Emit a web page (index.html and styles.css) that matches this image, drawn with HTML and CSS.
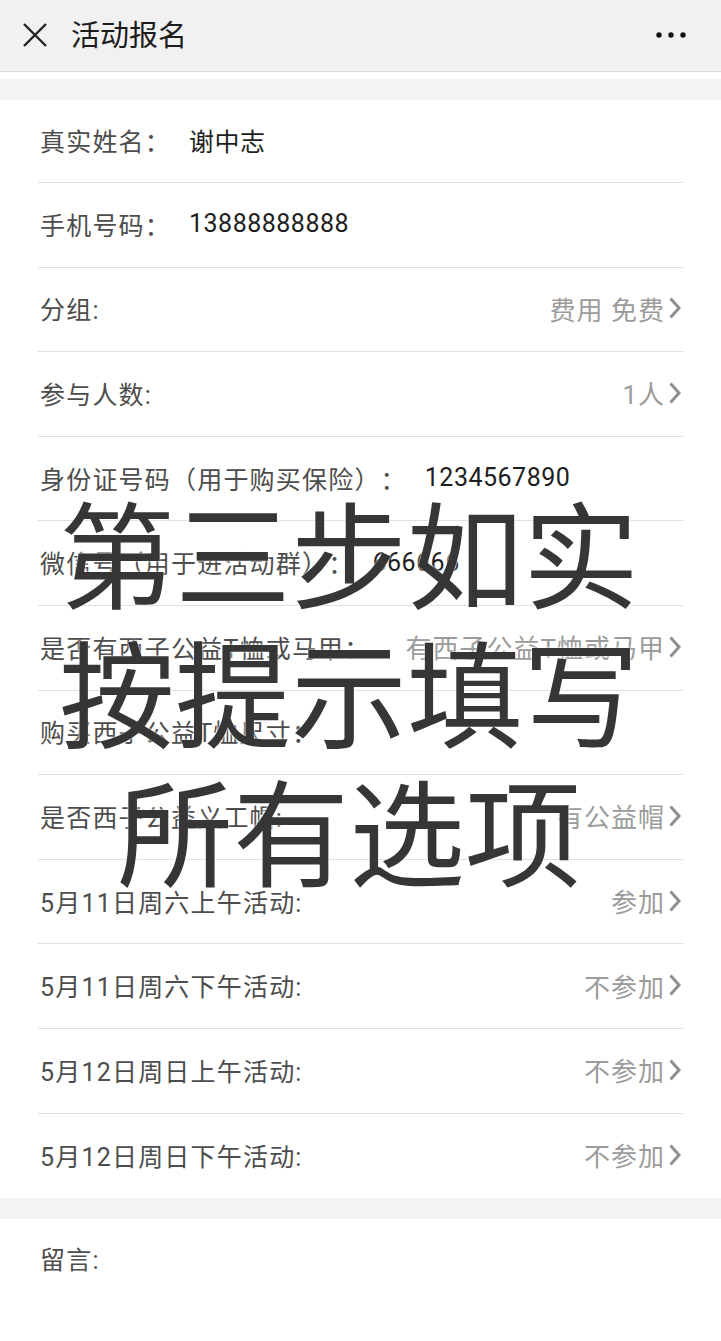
FILE: index.html
```html
<!DOCTYPE html>
<html lang="zh-CN">
<head>
<meta charset="utf-8">
<title>活动报名</title>
<link rel="stylesheet" href="styles.css">
</head>
<body>
<div class="page">
  <header class="topbar">
    <svg class="close-icon" width="28" height="28" viewBox="0 0 28 28"><path d="M3 3 L25 25 M25 3 L3 25" stroke="#222" stroke-width="2.4" fill="none" stroke-linecap="butt"/></svg>
    <h1 class="title">活动报名</h1>
    <svg class="more-icon" width="32" height="8" viewBox="0 0 32 8"><circle cx="4" cy="4" r="2.7" fill="#111"/><circle cx="16" cy="4" r="2.7" fill="#111"/><circle cx="28" cy="4" r="2.7" fill="#111"/></svg>
  </header>
  <div class="gap-white"></div>
  <div class="gap-gray"></div>

  <main class="content">
    <section class="form">
      <div class="row row-first"><span class="label">真实姓名：</span><span class="value">谢中志</span></div>
      <div class="row"><span class="label">手机号码：</span><span class="value">13888888888</span></div>
      <div class="row"><span class="label">分组:</span><span class="pick">费用 免费<svg class="chev" width="14" height="24" viewBox="0 0 14 24"><path d="M2.5 2.5 L11 12 L2.5 21.5" stroke="#8f8f8f" stroke-width="3" fill="none"/></svg></span></div>
      <div class="row"><span class="label">参与人数:</span><span class="pick">1人<svg class="chev" width="14" height="24" viewBox="0 0 14 24"><path d="M2.5 2.5 L11 12 L2.5 21.5" stroke="#8f8f8f" stroke-width="3" fill="none"/></svg></span></div>
      <div class="row"><span class="label">身份证号码（用于购买保险）：</span><span class="value">1234567890</span></div>
      <div class="row"><span class="label">微信号（用于进活动群）：</span><span class="value">666666</span></div>
      <div class="row"><span class="label">是否有西子公益T恤或马甲：</span><span class="pick">有西子公益T恤或马甲<svg class="chev" width="14" height="24" viewBox="0 0 14 24"><path d="M2.5 2.5 L11 12 L2.5 21.5" stroke="#8f8f8f" stroke-width="3" fill="none"/></svg></span></div>
      <div class="row"><span class="label">购买西子公益T恤尺寸：</span></div>
      <div class="row"><span class="label">是否西子公益义工帽:</span><span class="pick">有公益帽<svg class="chev" width="14" height="24" viewBox="0 0 14 24"><path d="M2.5 2.5 L11 12 L2.5 21.5" stroke="#8f8f8f" stroke-width="3" fill="none"/></svg></span></div>
      <div class="row"><span class="label">5月11日周六上午活动:</span><span class="pick">参加<svg class="chev" width="14" height="24" viewBox="0 0 14 24"><path d="M2.5 2.5 L11 12 L2.5 21.5" stroke="#8f8f8f" stroke-width="3" fill="none"/></svg></span></div>
      <div class="row"><span class="label">5月11日周六下午活动:</span><span class="pick">不参加<svg class="chev" width="14" height="24" viewBox="0 0 14 24"><path d="M2.5 2.5 L11 12 L2.5 21.5" stroke="#8f8f8f" stroke-width="3" fill="none"/></svg></span></div>
      <div class="row"><span class="label">5月12日周日上午活动:</span><span class="pick">不参加<svg class="chev" width="14" height="24" viewBox="0 0 14 24"><path d="M2.5 2.5 L11 12 L2.5 21.5" stroke="#8f8f8f" stroke-width="3" fill="none"/></svg></span></div>
      <div class="row row-last"><span class="label">5月12日周日下午活动:</span><span class="pick">不参加<svg class="chev" width="14" height="24" viewBox="0 0 14 24"><path d="M2.5 2.5 L11 12 L2.5 21.5" stroke="#8f8f8f" stroke-width="3" fill="none"/></svg></span></div>
    </section>
    <div class="gap-gray"></div>
    <section class="message">
      <span class="label">留言:</span>
    </section>

    <div class="overlay">第三步如实<br>按提示填写<br>所有选项</div>
  </main>
</div>
</body>
</html>
```

FILE: styles.css
```css
html, body {
  margin: 0;
  padding: 0;
  background: #ffffff;
}
body {
  font-family: Roboto, "Noto Sans CJK SC", "Noto Sans", sans-serif;
  width: 721px;
  height: 1341px;
  overflow: hidden;
  text-spacing-trim: space-all;
}
.page {
  display: flex;
  flex-direction: column;
}
.topbar {
  height: 71px;
  background: #f1f1f1;
  border-bottom: 1px solid #dcdcdc;
  display: flex;
  align-items: center;
  padding: 0 34px 0 21px;
}
.close-icon {
  display: block;
  margin-top: -2px;
}
.title {
  margin: -4px 0 0 22px;
  font-family: "Noto Sans CJK SC", sans-serif;
  font-size: 29px;
  font-weight: 400;
  color: #1c1c1c;
  flex: 1;
  line-height: 1;
}
.more-icon {
  display: block;
  margin-top: -2px;
}
.gap-white {
  height: 7px;
  background: #ffffff;
}
.gap-gray {
  height: 21px;
  background: #f4f4f4;
}
.content {
  position: relative;
}
.form {
  display: flex;
  flex-direction: column;
}
.row {
  margin: 0 38px;
  height: 84.6px;
  box-sizing: border-box;
  border-bottom: 1.5px solid #e0e0e0;
  display: flex;
  align-items: center;
  padding-left: 2px;
  padding-bottom: 2px;
  font-size: 25px;
}
.row-first {
  height: 83px;
}
.row-last {
  border-bottom: none;
  height: 84px;
}
.label {
  font-family: Roboto, "Noto Sans CJK SC", sans-serif;
  font-size: 25px;
  letter-spacing: 1.2px;
  color: #4d4d4d;
  white-space: nowrap;
  text-spacing-trim: space-all;
}
.value {
  margin-left: 18px;
  font-family: Roboto, "Noto Sans CJK SC", sans-serif;
  font-size: 25px;
  letter-spacing: 0.5px;
  color: #1e1e1e;
}
.pick {
  margin-left: auto;
  display: flex;
  align-items: center;
  font-family: Roboto, "Noto Sans CJK SC", sans-serif;
  font-size: 26px;
  letter-spacing: 1px;
  color: #9b9b9b;
  white-space: nowrap;
}
.chev {
  display: block;
  margin-left: 3px;
  margin-right: 1px;
}
.message {
  height: 120px;
  padding: 21px 40px 0;
  box-sizing: border-box;
  display: flex;
  align-items: flex-start;
}
.overlay {
  position: absolute;
  left: 0;
  width: 698px;
  top: 380px;
  text-align: center;
  font-family: "Noto Sans CJK SC", sans-serif;
  font-size: 116px;
  line-height: 139px;
  font-weight: 400;
  color: #363636;
  text-shadow: 0 0 2px rgba(255,255,255,0.9), 0 0 3px rgba(255,255,255,0.7);
  pointer-events: none;
}
```
